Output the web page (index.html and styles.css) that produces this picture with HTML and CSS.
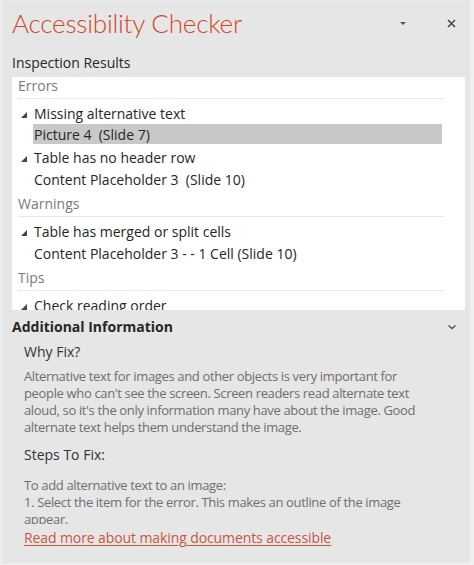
FILE: index.html
```html
<!DOCTYPE html>
<html lang="en">
<head>
<meta charset="utf-8">
<title>Accessibility Checker</title>
<link rel="stylesheet" href="styles.css">
</head>
<body>
<div class="pane">
  <header class="pane-header">
    <h1 class="pane-title">Accessibility Checker</h1>
    <div class="pane-controls">
      <svg class="ctl-menu" width="8" height="5" viewBox="0 0 8 5"><polygon points="1,1 7,1 4,4" fill="#555"/></svg>
      <svg class="ctl-close" width="9" height="9" viewBox="0 0 9 9"><path d="M1 1 L8 8 M8 1 L1 8" stroke="#444" stroke-width="1.5"/></svg>
    </div>
  </header>

  <div class="section-label">Inspection Results</div>

  <div class="results">
    <div class="group">
      <div class="group-title">Errors</div>
      <div class="group-items">
        <div class="row issue"><svg class="tri" width="6" height="6" viewBox="0 0 6 6"><polygon points="0,6 6,6 6,0" fill="#444"/></svg><span>Missing alternative text</span></div>
        <div class="row child selected">Picture 4&nbsp; (Slide 7)</div>
        <div class="row issue"><svg class="tri" width="6" height="6" viewBox="0 0 6 6"><polygon points="0,6 6,6 6,0" fill="#444"/></svg><span>Table has no header row</span></div>
        <div class="row child">Content Placeholder 3&nbsp; (Slide 10)</div>
      </div>
    </div>
    <div class="group">
      <div class="group-title">Warnings</div>
      <div class="group-items">
        <div class="row issue"><svg class="tri" width="6" height="6" viewBox="0 0 6 6"><polygon points="0,6 6,6 6,0" fill="#444"/></svg><span>Table has merged or split cells</span></div>
        <div class="row child">Content Placeholder 3 - - 1 Cell (Slide 10)</div>
      </div>
    </div>
    <div class="group">
      <div class="group-title">Tips</div>
      <div class="group-items">
        <div class="row issue"><svg class="tri" width="6" height="6" viewBox="0 0 6 6"><polygon points="0,6 6,6 6,0" fill="#444"/></svg><span>Check reading order</span></div>
      </div>
    </div>
  </div>

  <div class="info-header">
    <span class="info-title">Additional Information</span>
    <svg class="chev" width="10" height="6" viewBox="0 0 10 6"><path d="M1.5 1.5 L5 4.5 L8.5 1.5" fill="none" stroke="#555" stroke-width="1.5"/></svg>
  </div>

  <div class="info-body">
    <h2 class="info-sub">Why Fix?</h2>
    <p class="info-text">Alternative text for images and other objects is very important for people who can't see the screen. Screen readers read alternate text aloud, so it's the only information many have about the image. Good alternate text helps them understand the image.</p>
    <h2 class="info-sub steps">Steps To Fix:</h2>
    <p class="info-text steps-text">To add alternative text to an image:<br>1. Select the item for the error. This makes an outline of the image appear.</p>
  </div>

  <a class="more-link" href="#">Read more about making documents accessible</a>
</div>
</body>
</html>
```

FILE: styles.css
```css
html, body {
  margin: 0;
  padding: 0;
}
body {
  background: #e6e6e6;
  font-family: "Open Sans", "Noto Sans", sans-serif;
  color: #262626;
}
.pane {
  box-sizing: border-box;
  width: 474px;
  height: 565px;
  overflow: hidden;
  background: #e6e6e6;
  border-top: 1px solid #ececec;
  border-left: 2px solid #eeeeee;
  border-right: 4px solid #efefef;
  border-bottom: 2px solid #efefef;
  display: flex;
  flex-direction: column;
}
.pane-header {
  display: flex;
  align-items: center;
  height: 44px;
  padding: 0 0 0 10px;
}
.pane-title {
  margin: 0;
  font-family: "Lato", "Open Sans", sans-serif;
  font-weight: 300;
  font-size: 26px;
  color: #d04727;
  letter-spacing: -0.2px;
  flex: 1;
  line-height: 44px;
}
.pane-controls {
  display: flex;
  align-items: center;
  gap: 40px;
  padding-right: 14px;
}
.ctl-menu { margin-top: 1px; }
.section-label {
  font-size: 14px;
  line-height: 20px;
  padding: 8px 0 0 10px;
  height: 24px;
  color: #262626;
}
.results {
  margin: 0 5px 0 10px;
  height: 233px;
  overflow: hidden;
  background: #ffffff;
  padding: 0 21px 0 6px;
  flex: none;
}
.group-title {
  font-size: 14px;
  line-height: 18px;
  color: #7a7a7a;
  margin-bottom: 3px;
}
.group-items {
  border-top: 1px solid #e8e8e8;
  padding-top: 3px;
  padding-bottom: 5px;
}
.row {
  height: 22px;
  line-height: 21px;
  font-size: 14px;
  color: #262626;
  display: flex;
  align-items: center;
  white-space: nowrap;
}
.row.issue .tri {
  margin: 3px 0 0 3px;
  width: 6px;
  flex: none;
}
.row.issue span {
  margin-left: 7px;
}
.row.child {
  margin-left: 15px;
  padding-left: 1px;
}
.row.selected {
  background: #c8c8c8;
  height: 20px;
  margin-bottom: 2px;
  margin-right: 2px;
}
.info-header {
  display: flex;
  align-items: center;
  justify-content: space-between;
  padding: 4px 13px 0 10px;
  height: 24px;
  flex: none;
}
.info-title {
  font-weight: 700;
  font-size: 14px;
  color: #262626;
}
.chev { margin-top: 1px; }
.info-body {
  padding: 3px 0 0 22px;
  height: 183px;
  overflow: hidden;
  flex: none;
}
.info-sub {
  margin: 0;
  font-weight: 400;
  font-size: 14px;
  line-height: 22px;
  color: #333333;
}
.info-text {
  margin: 5px 0 0 0;
  font-size: 13px;
  line-height: 17px;
  letter-spacing: -0.35px;
  color: #6e6e6e;
  padding-right: 40px;
}
.info-sub.steps {
  margin-top: 8px;
}
.info-text.steps-text {
  margin-top: 11px;
}
.more-link {
  margin: 3px 0 0 22px;
  font-size: 14px;
  line-height: 22px;
  letter-spacing: -0.1px;
  color: #c9553f;
  text-decoration: underline;
  text-underline-offset: 2px;
  align-self: flex-start;
}
```
